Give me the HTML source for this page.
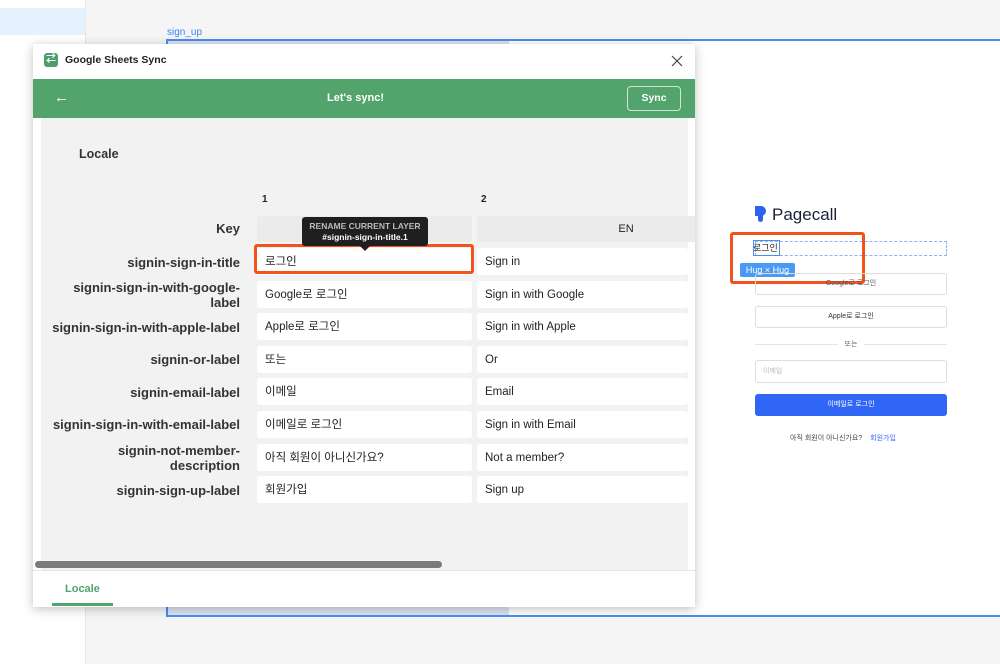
<!DOCTYPE html>
<html><head><meta charset="utf-8"><style>
*{box-sizing:border-box;margin:0;padding:0}
body{width:1000px;height:664px;overflow:hidden;background:#f5f5f5;font-family:"Liberation Sans","Noto Sans CJK KR",sans-serif;position:relative;color:#222}
.abs{position:absolute}
.key{position:absolute;right:760px;font-size:13px;font-weight:bold;text-align:right;line-height:15px;color:#333}
.cell{position:absolute;background:#fff;border-radius:3px;height:27px;font-size:11.5px;line-height:29px;padding-left:8px;color:#222}
</style></head><body>
<div class="abs" style="left:0;top:0;width:86px;height:664px;background:#fff;border-right:1px solid #e6e6e6"></div>
<div class="abs" style="left:0;top:8px;width:85px;height:27px;background:#e5f2fd"></div>
<div class="abs" style="left:167px;top:27px;font-size:10px;color:#3b82f6">sign_up</div>
<div class="abs" style="left:166px;top:39px;width:834px;height:578px;background:#fff;border:2px solid #4a8ef0;border-right:none"></div>
<div class="abs" style="left:168px;top:41px;width:341px;height:4px;background:#dbe3f3"></div>
<div class="abs" style="left:168px;top:607px;width:341px;height:8px;background:#dbe3f3"></div>

<!-- Pagecall preview -->
<div class="abs" style="left:755px;top:206px;width:12px;height:17px">
<div class="abs" style="left:0;top:0;width:11px;height:10px;background:#2b63f0;border-radius:0 5px 5px 0"></div>
<div class="abs" style="left:3px;top:9px;width:5px;height:7px;background:#2b63f0;border-radius:0 0 3px 3px"></div></div>
<div class="abs" style="left:772px;top:205px;font-size:17px;color:#1c2135;font-weight:500">Pagecall</div>
<div class="abs" style="left:755px;top:241px;width:192px;height:15px;border:1px dashed #8ab4f8"></div>
<div class="abs" style="left:753px;top:241px;font-size:9px;color:#222">로그인</div>
<div class="abs" style="left:753px;top:240px;width:27px;height:16px;border:1px solid #4a8ef0"></div>
<div class="abs" style="left:740px;top:263px;width:55px;height:14px;background:#4a9af5;border-radius:2px;color:#fff;font-size:9px;line-height:14px;text-align:center">Hug × Hug</div>
<div class="abs" style="left:730px;top:232px;width:135px;height:52px;border:3px solid #f2521e;border-radius:3px"></div>
<div class="abs" style="left:755px;top:273px;width:192px;height:22px;border:1px solid #ddd;border-radius:3px;font-size:7px;line-height:20px;text-align:center;color:#555">Google로 로그인</div>
<div class="abs" style="left:755px;top:306px;width:192px;height:22px;border:1px solid #ddd;border-radius:3px;font-size:7px;line-height:20px;text-align:center;color:#333"> Apple로 로그인</div>
<div class="abs" style="left:755px;top:344px;width:192px;height:1px;background:#e5e5e5"></div>
<div class="abs" style="left:838px;top:339px;width:26px;background:#fff;font-size:7px;text-align:center;color:#666">또는</div>
<div class="abs" style="left:755px;top:360px;width:192px;height:23px;border:1px solid #ddd;border-radius:3px;font-size:7px;line-height:21px;padding-left:7px;color:#bbb">이메일</div>
<div class="abs" style="left:755px;top:394px;width:192px;height:22px;background:#2f66f6;border-radius:3px;font-size:7px;line-height:22px;text-align:center;color:#fff">이메일로 로그인</div>
<div class="abs" style="left:790px;top:433px;font-size:7px;color:#444">아직 회원이 아니신가요? <span style="color:#2f66f6;margin-left:6px">회원가입</span></div>

<!-- plugin panel -->
<div class="abs" style="left:33px;top:44px;width:662px;height:563px;background:#fff;box-shadow:0 2px 10px rgba(0,0,0,.25)"></div>
<div class="abs" style="left:44px;top:53px;width:14px;height:14px;background:#4f9e69;border-radius:3px;color:#fff;font-size:10px;line-height:14px;text-align:center;font-weight:bold">⇄</div>
<div class="abs" style="left:65px;top:54px;font-size:10.5px;font-weight:bold;color:#222">Google Sheets Sync</div>
<svg class="abs" style="left:671px;top:55px" width="12" height="12"><path d="M1 1L11 11M11 1L1 11" stroke="#444" stroke-width="1.2"/></svg>
<div class="abs" style="left:33px;top:79px;width:662px;height:39px;background:#52a36c"></div>
<div class="abs" style="left:54px;top:89px;font-size:15px;color:#fff">←</div>
<div class="abs" style="left:327px;top:92px;font-size:11px;font-weight:bold;color:#fff">Let's sync!</div>
<div class="abs" style="left:627px;top:86px;width:54px;height:25px;border:1px solid #cfe5d6;border-radius:4px;color:#fff;font-size:10.5px;font-weight:bold;line-height:23px;text-align:center">Sync</div>
<div class="abs" style="left:41px;top:118px;width:647px;height:452px;background:#f2f2f2"></div>
<div class="abs" style="left:79px;top:147px;font-size:12.5px;font-weight:bold;color:#333">Locale</div>
<div class="abs" style="left:262px;top:194px;font-size:10px;font-weight:bold">1</div>
<div class="abs" style="left:481px;top:194px;font-size:10px;font-weight:bold">2</div>
<div class="key" style="top:221px">Key</div>
<div class="abs" style="left:257px;top:216px;width:215px;height:26px;background:#ebebeb;border-radius:3px"></div>
<div class="abs" style="left:477px;top:216px;width:218px;height:26px;background:#ebebeb;font-size:11px;line-height:26px;text-align:center;padding-left:80px">EN</div>

<div class="key" style="top:255px">signin-sign-in-title</div>
<div class="key" style="top:280px">signin-sign-in-with-google-<br>label</div>
<div class="key" style="top:320px">signin-sign-in-with-apple-label</div>
<div class="key" style="top:352px">signin-or-label</div>
<div class="key" style="top:385px">signin-email-label</div>
<div class="key" style="top:417px">signin-sign-in-with-email-label</div>
<div class="key" style="top:443px">signin-not-member-<br>description</div>
<div class="key" style="top:483px">signin-sign-up-label</div>

<div class="cell" style="left:257px;top:248px;width:215px">로그인</div>
<div class="cell" style="left:257px;top:281px;width:215px">Google로 로그인</div>
<div class="cell" style="left:257px;top:313px;width:215px">Apple로 로그인</div>
<div class="cell" style="left:257px;top:346px;width:215px">또는</div>
<div class="cell" style="left:257px;top:378px;width:215px">이메일</div>
<div class="cell" style="left:257px;top:411px;width:215px">이메일로 로그인</div>
<div class="cell" style="left:257px;top:444px;width:215px">아직 회원이 아니신가요?</div>
<div class="cell" style="left:257px;top:476px;width:215px">회원가입</div>
<div class="cell" style="left:477px;top:248px;width:211px">Sign in</div>
<div class="cell" style="left:477px;top:281px;width:211px">Sign in with Google</div>
<div class="cell" style="left:477px;top:313px;width:211px">Sign in with Apple</div>
<div class="cell" style="left:477px;top:346px;width:211px">Or</div>
<div class="cell" style="left:477px;top:378px;width:211px">Email</div>
<div class="cell" style="left:477px;top:411px;width:211px">Sign in with Email</div>
<div class="cell" style="left:477px;top:444px;width:211px">Not a member?</div>
<div class="cell" style="left:477px;top:476px;width:211px">Sign up</div>
<div class="abs" style="left:254px;top:244px;width:220px;height:30px;border:3px solid #f2521e;border-radius:3px"></div>
<div class="abs" style="left:302px;top:217px;width:126px;height:29px;background:#1f1f1f;border-radius:3px;color:#fff;font-size:8.5px;text-align:center;line-height:11px;padding-top:4px"><span style="color:#bbb;font-weight:bold">RENAME CURRENT LAYER</span><br><b>#signin-sign-in-title.1</b></div>
<div class="abs" style="left:360px;top:246px;width:0;height:0;border-left:5px solid transparent;border-right:5px solid transparent;border-top:5px solid #1f1f1f"></div>

<div class="abs" style="left:35px;top:561px;width:407px;height:7px;background:#7a7a7a;border-radius:4px"></div>
<div class="abs" style="left:33px;top:570px;width:662px;height:1px;background:#e5e5e5"></div>
<div class="abs" style="left:65px;top:583px;font-size:11px;font-weight:bold;color:#52a36c">Locale</div>
<div class="abs" style="left:52px;top:603px;width:61px;height:3px;background:#52a36c"></div>
</body></html>
